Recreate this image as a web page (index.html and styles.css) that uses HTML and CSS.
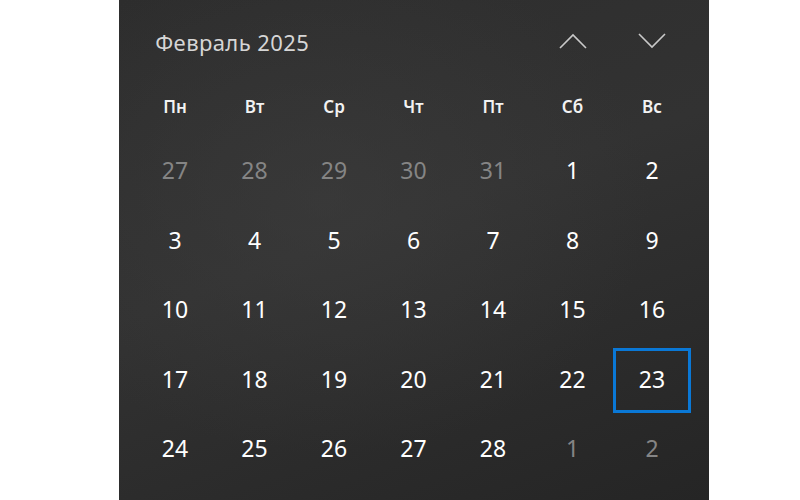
FILE: index.html
```html
<!DOCTYPE html>
<html lang="ru">
<head>
<meta charset="utf-8">
<title>Календарь</title>
<link rel="stylesheet" href="styles.css">
</head>
<body>
<div class="panel">
  <div class="header">
    <div class="title">Февраль 2025</div>
    <button class="nav" aria-label="Предыдущий месяц">
      <svg width="28" height="16" viewBox="0 0 28 16"><path d="M1 15 L14 2 L27 15" fill="none" stroke="#c9c9c9" stroke-width="1.6"/></svg>
    </button>
    <button class="nav" aria-label="Следующий месяц">
      <svg width="28" height="16" viewBox="0 0 28 16"><path d="M1 1 L14 14 L27 1" fill="none" stroke="#c9c9c9" stroke-width="1.6"/></svg>
    </button>
  </div>
  <div class="weekdays">
    <div>Пн</div><div>Вт</div><div>Ср</div><div>Чт</div><div>Пт</div><div>Сб</div><div>Вс</div>
  </div>
  <div class="days">
    <div class="day other">27</div><div class="day other">28</div><div class="day other">29</div><div class="day other">30</div><div class="day other">31</div><div class="day">1</div><div class="day">2</div>
    <div class="day">3</div><div class="day">4</div><div class="day">5</div><div class="day">6</div><div class="day">7</div><div class="day">8</div><div class="day">9</div>
    <div class="day">10</div><div class="day">11</div><div class="day">12</div><div class="day">13</div><div class="day">14</div><div class="day">15</div><div class="day">16</div>
    <div class="day">17</div><div class="day">18</div><div class="day">19</div><div class="day">20</div><div class="day">21</div><div class="day">22</div><div class="day today">23</div>
    <div class="day">24</div><div class="day">25</div><div class="day">26</div><div class="day">27</div><div class="day">28</div><div class="day other">1</div><div class="day other">2</div>
  </div>
</div>
</body>
</html>
```
FILE: styles.css
```css
html, body {
  margin: 0;
  padding: 0;
  background: #ffffff;
}
body {
  width: 800px;
  height: 500px;
  overflow: hidden;
  font-family: "Noto Sans", "Open Sans", sans-serif;
}
.panel {
  margin-left: 119px;
  width: 590px;
  height: 500px;
  box-sizing: border-box;
  padding: 0 17px 0 16.25px;
  background:
    radial-gradient(ellipse at 35% 40%, rgba(62,62,62,0.55) 0%, rgba(62,62,62,0) 60%),
    linear-gradient(160deg, #2d2d2d 0%, #323232 45%, #252525 100%);
  color: #ffffff;
}
.header {
  display: grid;
  grid-template-columns: repeat(7, 79.5px);
  height: 84px;
  align-items: center;
}
.title {
  grid-column: 1 / span 5;
  padding-left: 20px;
  font-size: 22px;
  letter-spacing: 0.4px;
  color: #d6d6d6;
  padding-bottom: 1px;
}
.nav {
  background: none;
  border: none;
  padding: 0;
  margin: 0;
  height: 84px;
  display: flex;
  align-items: center;
  justify-content: center;
  padding-bottom: 3px;
  box-sizing: border-box;
}
.nav svg {
  display: block;
}
.weekdays {
  display: grid;
  grid-template-columns: repeat(7, 79.5px);
  height: 51.25px;
  align-items: center;
  padding-bottom: 6px;
  box-sizing: border-box;
}
.weekdays div {
  text-align: center;
  font-size: 17px;
  font-weight: 600;
  color: #f2f2f2;
}
.days {
  display: grid;
  grid-template-columns: repeat(7, 79.5px);
  grid-auto-rows: 69.5px;
}
.day {
  position: relative;
  display: flex;
  align-items: center;
  justify-content: center;
  font-size: 23px;
  color: #ffffff;
}
.day.other {
  color: #858585;
}
.day.today::after {
  content: "";
  position: absolute;
  top: 4px;
  bottom: 0;
  left: 1px;
  right: 1px;
  border: 3px solid #0a78d6;
}
```
